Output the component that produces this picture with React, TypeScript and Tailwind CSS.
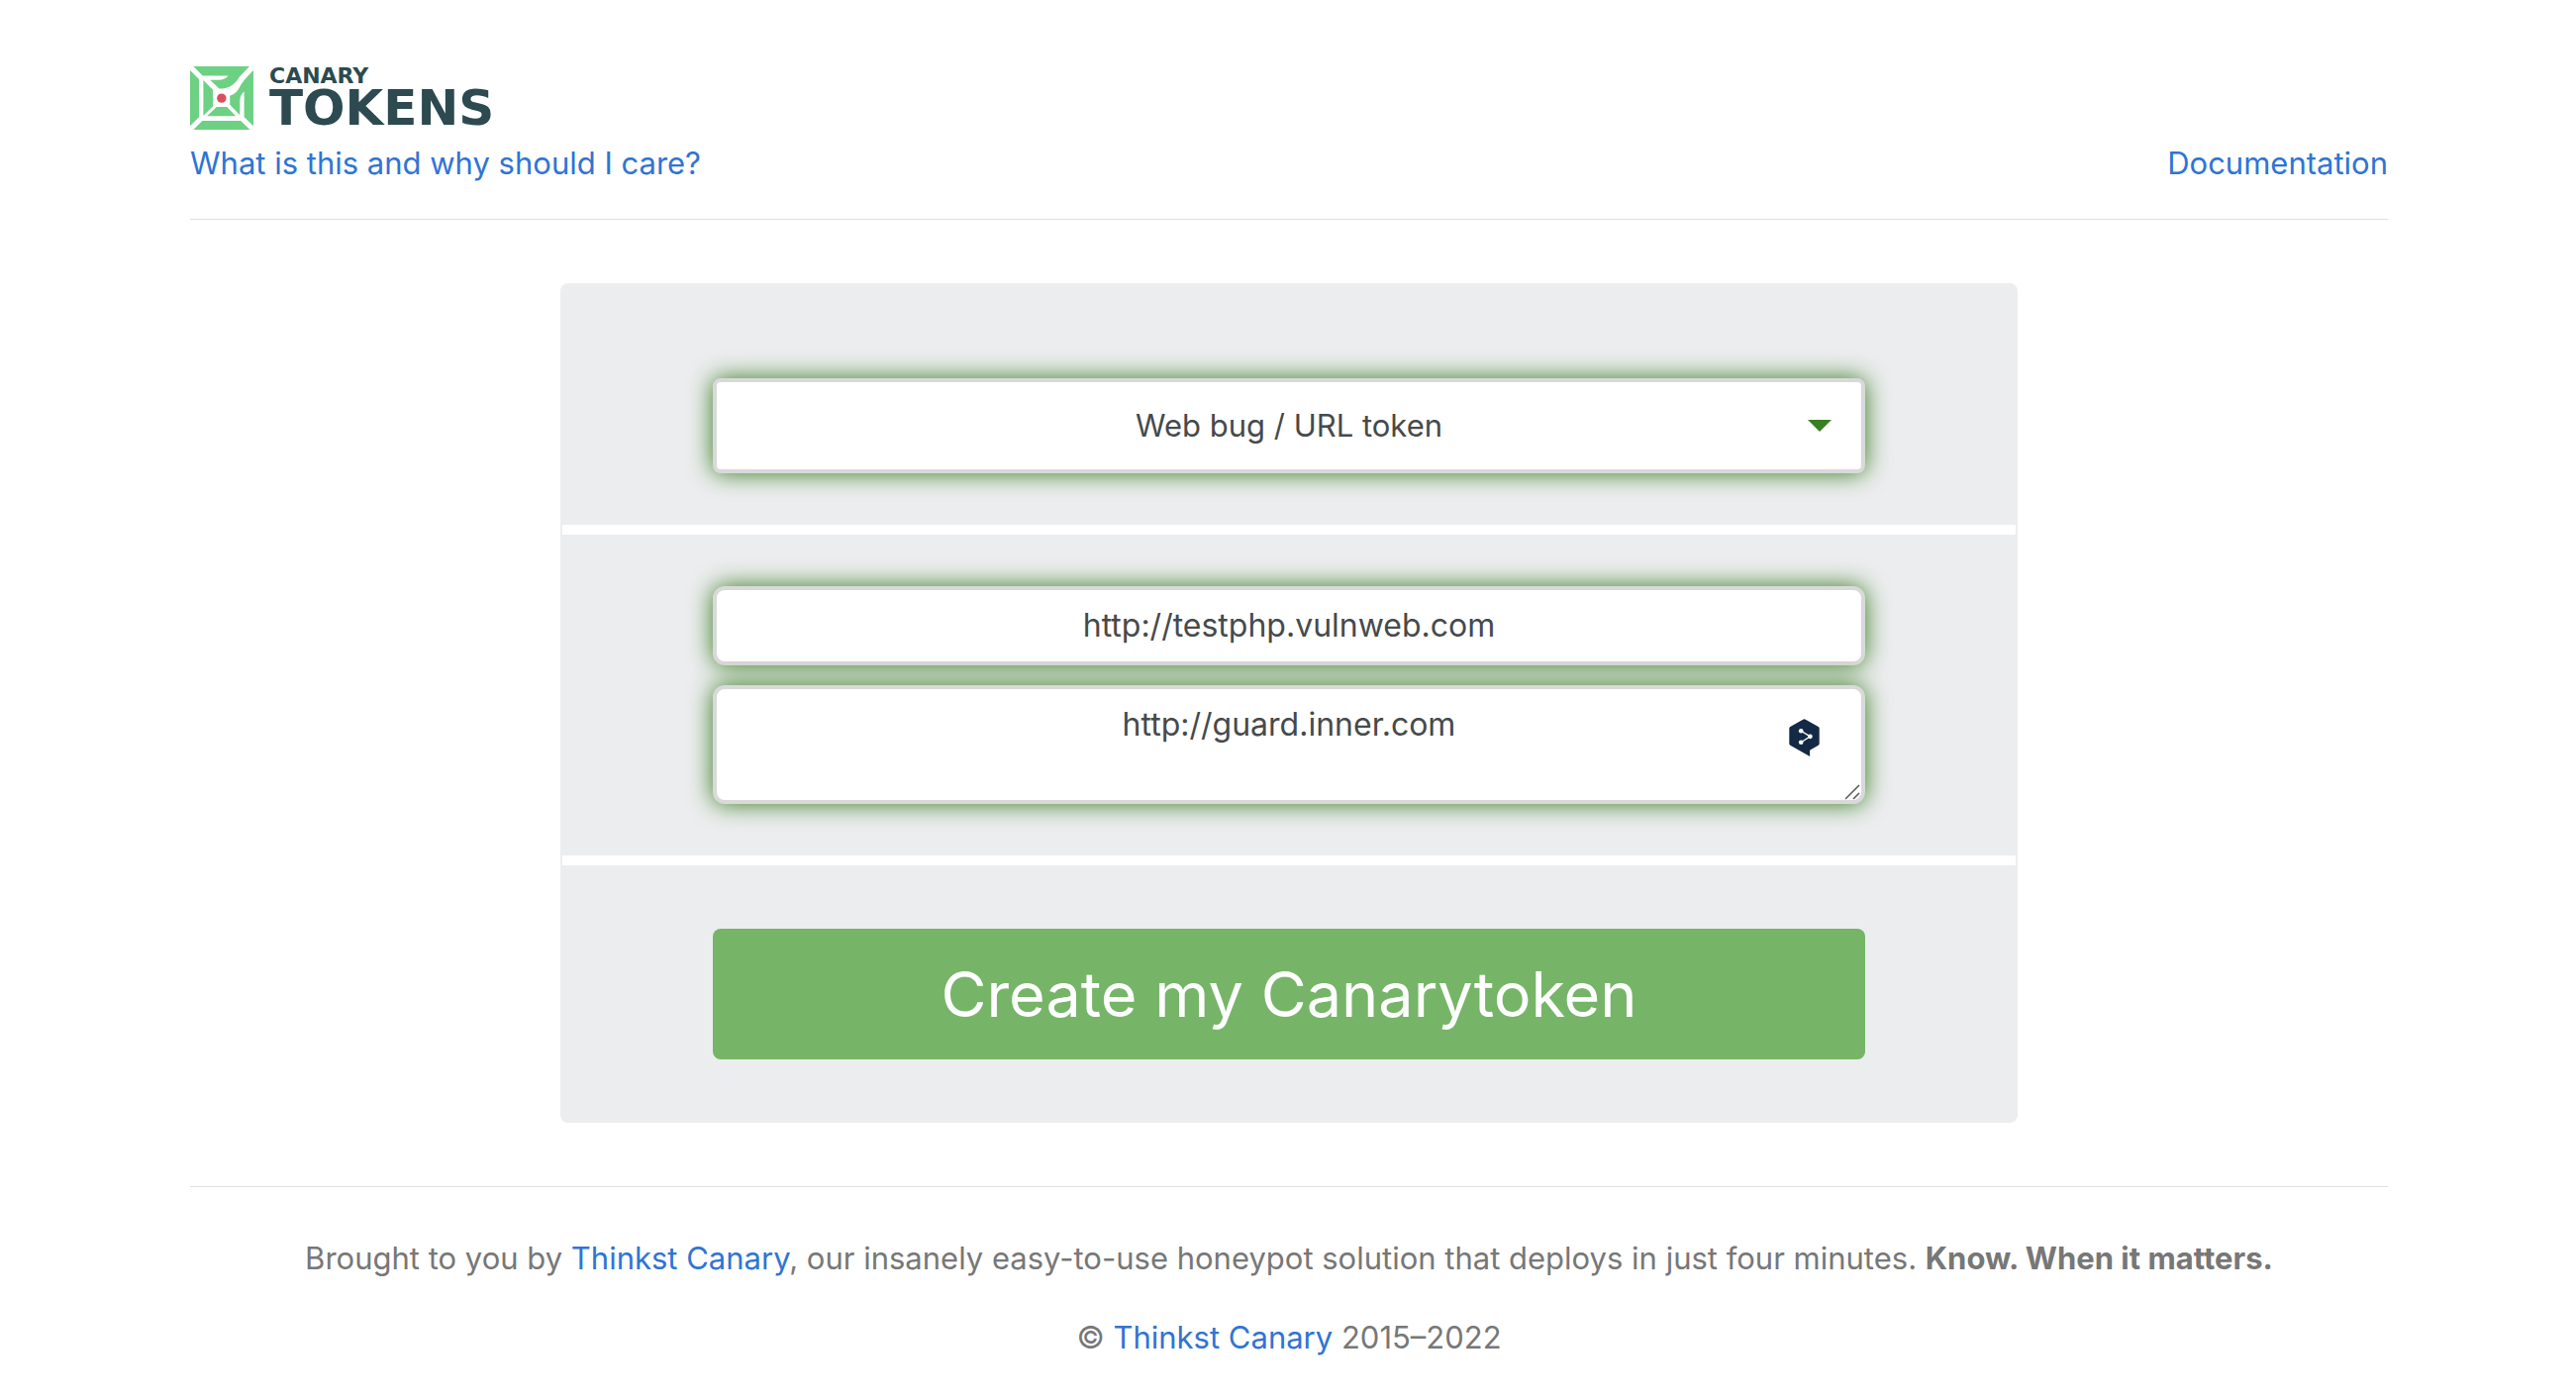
import { useState } from "react";

const fieldStyle =
  "block w-full border-4 border-[#d9d9d9] bg-white text-center text-[#464a4c] shadow-[0_0_24px_#347b1d] outline-none";

function LogoMark() {
  return (
    <svg viewBox="38 52 191 191" className="size-16 shrink-0" aria-hidden="true">
      <g fill="#6dd184">
        <path d="M48 52H217L187 83C173 107 154 120 126 119L98 93H124C138 92 148 88 153 80H76Z" />
        <path d="M38 64L65 91V205L38 232Z" />
        <path d="M78 94L107 123V172L78 201Z" />
        <path d="M48 243L75 216H191L218 243Z" />
        <path d="M89 202L118 174H149L176 202Z" />
        <path d="M229 64V232L201 205V128C193 134 188 144 188 158V199L158 168V141C173 136 182 126 188 114C195 100 206 87 229 64Z" />
      </g>
      <circle cx="133" cy="148" r="14" fill="#db505e" />
    </svg>
  );
}

function Logo() {
  return (
    <a href="#home" aria-label="Canary Tokens" className="flex h-16 w-fit items-center gap-4">
      <LogoMark />
      <span className="flex flex-col font-['DejaVu_Sans'] font-bold text-[#2c4a50]">
        <span className="text-[22px] leading-5">CANARY</span>
        <span className="text-[50px] leading-11">TOKENS</span>
      </span>
    </a>
  );
}

function TranslateBadge() {
  return (
    <svg viewBox="321 437 92 115" className="h-[38px] w-[31px]" aria-hidden="true">
      <path
        d="M363 439Q367 436 371 439L410 461Q413 463 413 467V512Q413 516 410 518L384 533V552L324 518Q321 516 321 512V467Q321 463 324 461Z"
        fill="#142945"
      />
      <path d="M357 474L385 491L357 509" fill="none" stroke="#fff" strokeWidth="4" />
      <g fill="#fff">
        <circle cx="357" cy="474" r="7" />
        <circle cx="385" cy="491" r="7" />
        <circle cx="357" cy="509" r="7" />
      </g>
    </svg>
  );
}

export default function App() {
  const [type, setType] = useState("web");
  const [url, setUrl] = useState("http://testphp.vulnweb.com");
  const [memo, setMemo] = useState("http://guard.inner.com");

  return (
    <div className="min-h-screen bg-white pt-[67px] pr-6 pb-8 pl-[26px] font-[Inter,sans-serif] text-[31px] leading-12 text-[#777]">
      <div className="mx-auto max-w-[2220px]">
        <header className="border-b border-[#e0e0e0] pb-8">
          <Logo />
          <nav className="mt-[10px] flex justify-between text-[#3074d3]">
            <a href="#about">What is this and why should I care?</a>
            <a href="#docs">Documentation</a>
          </nav>
        </header>

        <main className="pt-16">
          <form
            className="mx-auto max-w-[1472px] rounded-lg border-2 border-[#ecedef] bg-[#ecedef]"
            onSubmit={(e) => e.preventDefault()}
          >
            <div className="border-b-[10px] border-white px-[152px] pt-[94px] pb-[52px]">
              <div className="relative">
                <select
                  aria-label="Token type"
                  value={type}
                  onChange={(e) => setType(e.target.value)}
                  className={`${fieldStyle} h-24 appearance-none rounded-lg`}
                >
                  <option value="web">Web bug / URL token</option>
                </select>
                <svg
                  viewBox="0 0 24 12"
                  className="pointer-events-none absolute top-[42px] right-[34px] h-3 w-6"
                  aria-hidden="true"
                >
                  <path d="M0 0H24L12 12Z" fill="#387f22" />
                </svg>
              </div>
            </div>

            <div className="flex flex-col gap-5 border-b-[10px] border-white px-[152px] py-[52px]">
              <input
                type="text"
                aria-label="Webhook URL"
                value={url}
                onChange={(e) => setUrl(e.target.value)}
                className={`${fieldStyle} h-20 rounded-xl pb-0.5 text-[32px]`}
              />
              <div className="relative">
                <textarea
                  aria-label="Reminder note"
                  spellCheck={false}
                  value={memo}
                  onChange={(e) => setMemo(e.target.value)}
                  className={`${fieldStyle} h-[120px] resize-none rounded-xl pt-3 text-[32px]`}
                />
                <div className="absolute top-[34px] right-[46px]">
                  <TranslateBadge />
                </div>
                <svg
                  viewBox="0 0 16 16"
                  className="pointer-events-none absolute right-1 bottom-1 size-4"
                  aria-hidden="true"
                >
                  <path d="M0 15L14 1M8 15L14 9" stroke="#555" strokeWidth="1.5" />
                </svg>
              </div>
            </div>

            <div className="px-[152px] pt-16 pb-[62px]">
              <button
                type="submit"
                className="h-[132px] w-full rounded-lg bg-[#76b568] text-[63px] font-normal text-white"
              >
                Create my Canarytoken
              </button>
            </div>
          </form>
        </main>

        <footer className="mt-16 border-t border-[#e0e0e0] pt-12 text-center">
          <p>
            Brought to you by{" "}
            <a href="#canary" className="text-[#3074d3]">
              Thinkst Canary
            </a>
            , our insanely easy-to-use honeypot solution that deploys in just four minutes.{" "}
            <strong className="font-bold">Know. When it matters.</strong>
          </p>
          <p className="mt-8">
            ©{" "}
            <a href="#thinkst" className="text-[#3074d3]">
              Thinkst Canary
            </a>{" "}
            2015–2022
          </p>
        </footer>
      </div>
    </div>
  );
}
